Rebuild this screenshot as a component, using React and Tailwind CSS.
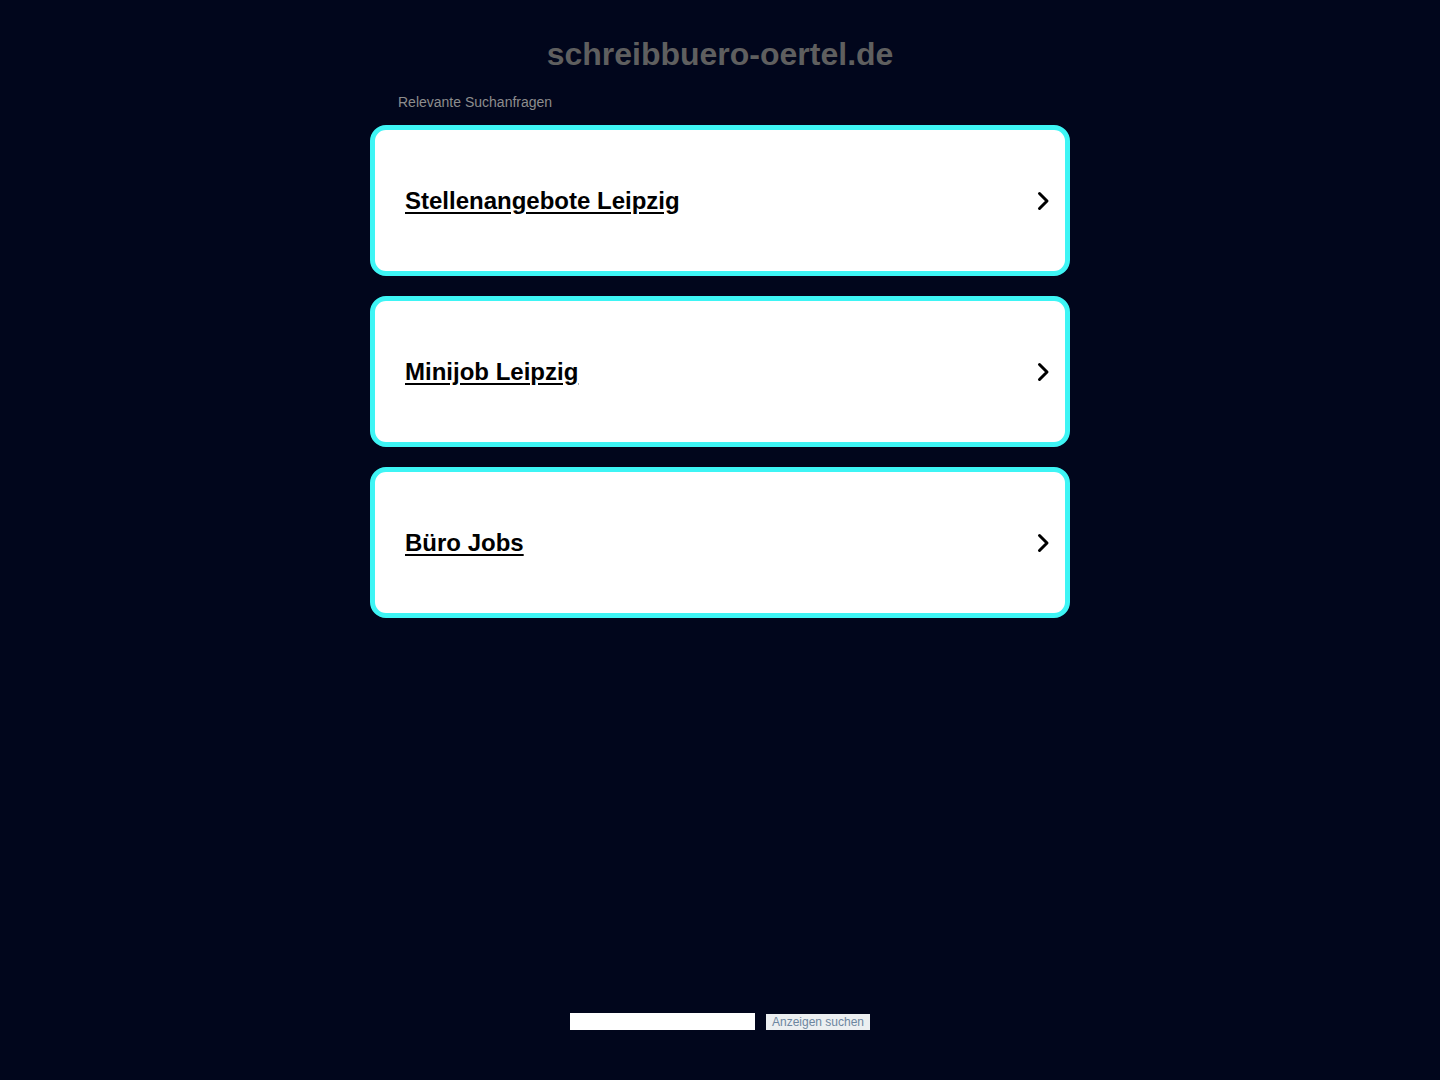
const links = ['Stellenangebote Leipzig', 'Minijob Leipzig', 'Büro Jobs'];

const Chevron = () => (
  <svg width="14" height="20" viewBox="0 0 14 20" fill="none" className="shrink-0">
    <path d="M3.5 2.5 L11 10 L3.5 17.5" stroke="#000" strokeWidth="3" strokeLinecap="round" strokeLinejoin="round" />
  </svg>
);

export default function App() {
  return (
    <div className="min-h-[1080px] bg-[#01061c] flex flex-col items-center font-['Liberation_Sans',Arial,sans-serif]">
      <h1 className="mt-[34px] text-[32px] leading-[40px] font-bold text-[#5f5f5f]">schreibbuero-oertel.de</h1>
      <div className="w-[700px] mt-[20px]">
        <p className="pl-[28px] text-[14px] leading-[16px] text-[#8d8d8d]">Relevante Suchanfragen</p>
        <div className="mt-[15px] flex flex-col gap-[20px]">
          {links.map((t) => (
            <a
              key={t}
              href="#"
              className="h-[151px] bg-white border-[5px] border-[#3ef5f5] rounded-[16px] flex items-center justify-between pl-[30px] pr-[15px]"
            >
              <span className="text-[24px] leading-[28px] font-bold text-black underline underline-offset-[3px]">{t}</span>
              <Chevron />
            </a>
          ))}
        </div>
      </div>
      <div className="flex-1" />
      <div className="mb-[50px] flex items-center gap-[11px]">
        <input className="w-[185px] h-[17px] bg-white border-0 outline-none" />
        <button className="h-[16px] px-[6px] bg-[#eceff1] text-[#6c86a0] text-[12px] leading-[16px]">Anzeigen suchen</button>
      </div>
    </div>
  );
}
